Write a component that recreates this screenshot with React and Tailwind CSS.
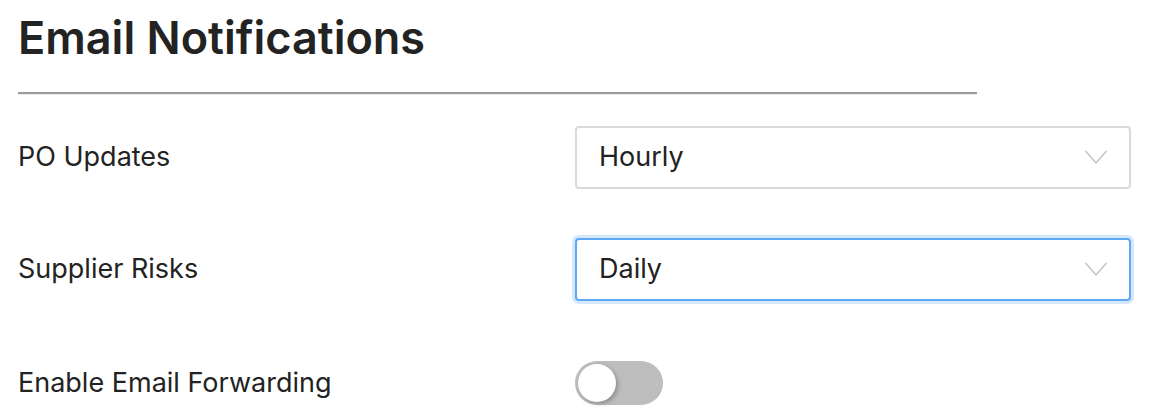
function Chevron() {
  return (
    <svg width="22" height="15" viewBox="0 0 22 15" fill="none" className="text-[#c2c2c2]">
      <polyline points="1,1.5 11,13 21,1.5" stroke="currentColor" strokeWidth="1.5" strokeLinecap="round" strokeLinejoin="round" />
    </svg>
  );
}

function SelectBox({ value, focused }) {
  return (
    <div
      className={`w-[556px] h-[63px] flex items-center justify-between pl-[22px] pr-[22px] bg-white rounded-[4px] ${
        focused
          ? "border-2 border-[#5fa8f4] ring-[3px] ring-[#d5e7fb]"
          : "border-2 border-[#dadada]"
      }`}
    >
      <span className="text-[27px] text-[#222]">{value}</span>
      <Chevron />
    </div>
  );
}

export default function App() {
  return (
    <div
      className="w-[1170px] h-[416px] bg-white pl-[18px] overflow-hidden"
      style={{ fontFamily: "Inter, 'Noto Sans', sans-serif" }}
    >
      <h1 className="text-[45px] font-semibold text-[#232323] leading-[1] pt-[15px]">
        Email Notifications
      </h1>
      <div className="w-[959px] mt-[32px] border-t-2 border-[#9b9b9b] border-b border-b-[#ececec]" />

      <div className="mt-[31px] flex flex-col gap-[49px]">
        <div className="flex items-center">
          <span className="w-[557px] text-[27px] text-[#232323]">PO Updates</span>
          <SelectBox value="Hourly" />
        </div>
        <div className="flex items-center">
          <span className="w-[557px] text-[27px] text-[#232323]">Supplier Risks</span>
          <SelectBox value="Daily" focused />
        </div>
        <div className="flex items-center mt-[11px]">
          <span className="w-[557px] text-[27px] text-[#232323]">Enable Email Forwarding</span>
          <div className="w-[88px] h-[44px] rounded-full bg-[#bdbdbd] p-[3px] flex items-center">
            <div className="w-[38px] h-[38px] rounded-full bg-white shadow-[2px_2px_4px_rgba(0,0,0,0.25)]" />
          </div>
        </div>
      </div>
    </div>
  );
}
